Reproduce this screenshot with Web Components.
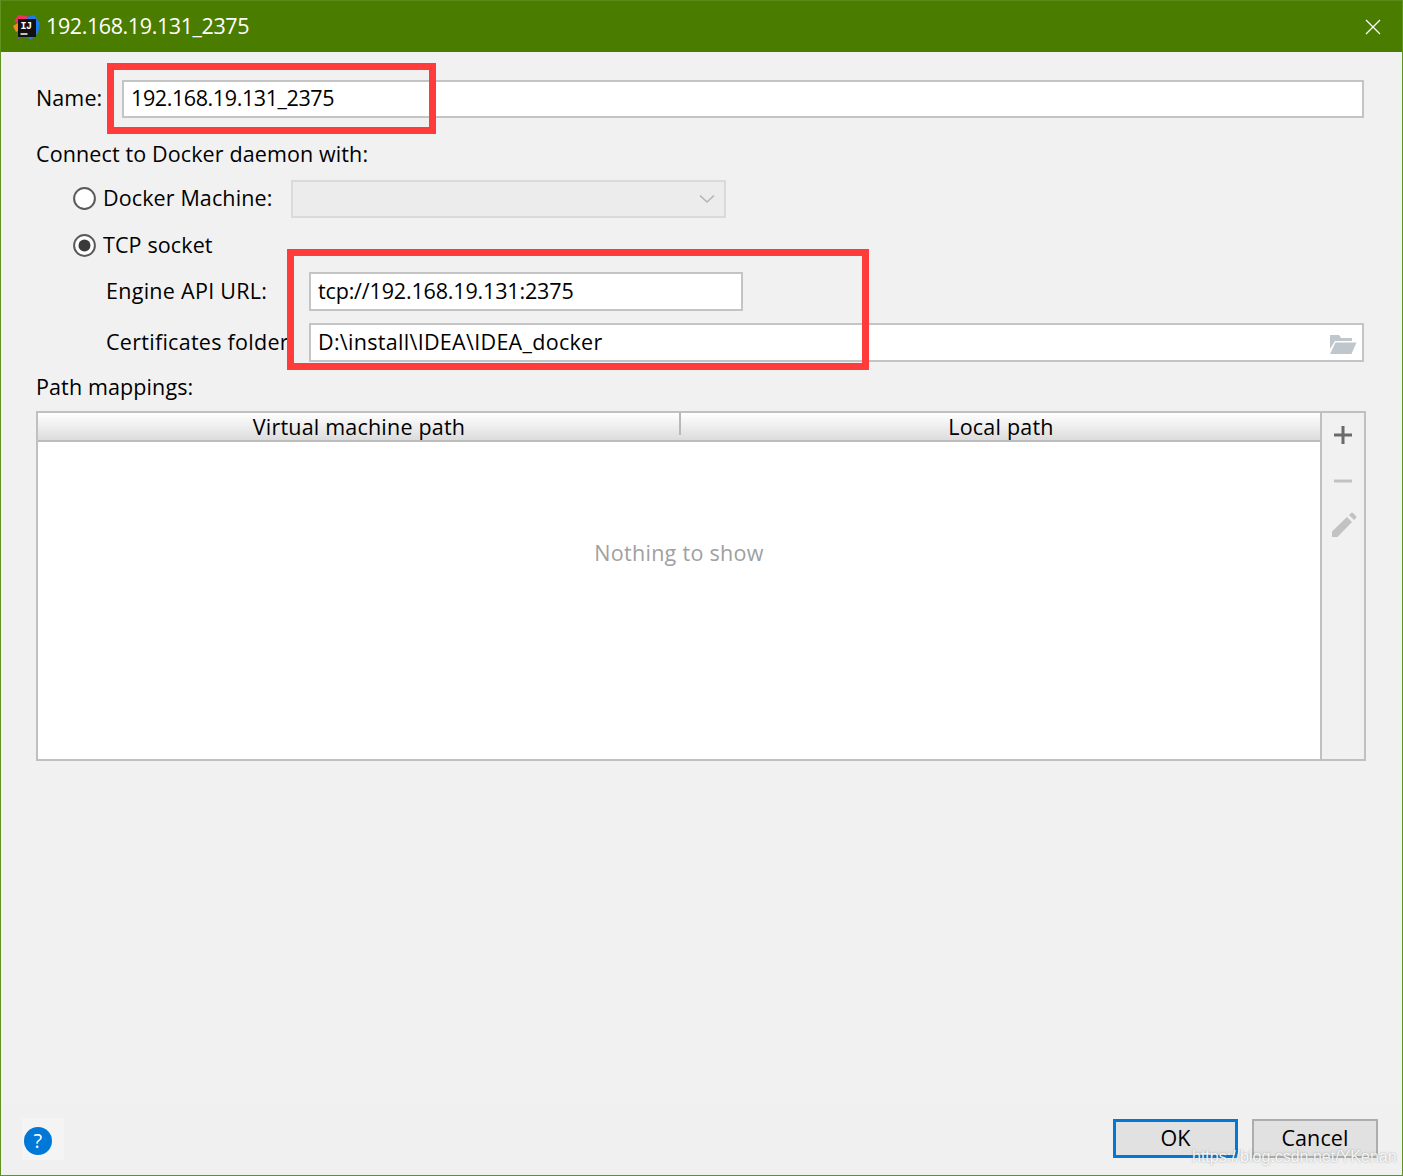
<!DOCTYPE html>
<html>
<head>
<meta charset="utf-8">
<title>192.168.19.131_2375</title>
<style>
  html, body { margin: 0; padding: 0; }
  body { font: 21.5px/30px 'Open Sans', 'Noto Sans', sans-serif; color: #000; letter-spacing: .12px; }
</style>
</head>
<body>
<ij-dialog heading="192.168.19.131_2375">
  <ij-row label="Name:" label-width="86" style="height:38px;margin-top:28px;margin-right:38px;--label-pad:2px">
    <ij-input value="192.168.19.131_2375" spacing="-.4"></ij-input>
  </ij-row>
  <ij-text style="margin-top:21px">Connect to Docker daemon with:</ij-text>
  <ij-row style="height:38px;margin-top:11px;margin-left:37px">
    <ij-radio style="width:218px;padding-bottom:2px">Docker Machine:</ij-radio>
    <ij-select style="width:435px"></ij-select>
  </ij-row>
  <ij-radio checked style="margin-top:12px;margin-left:37px">TCP socket</ij-radio>
  <ij-row label="Engine API URL:" label-width="203" style="height:39px;margin-top:12px;margin-left:70px;letter-spacing:.28px">
    <ij-input value="tcp://192.168.19.131:2375" spacing="-.16" style="flex:none;width:434px"></ij-input>
  </ij-row>
  <ij-row label="Certificates folder:" label-width="203" style="height:39px;margin-top:12px;margin-left:70px;margin-right:38px;letter-spacing:.28px">
    <ij-input value="D:\install\IDEA\IDEA_docker" spacing=".3" folder></ij-input>
  </ij-row>
  <ij-text style="margin-top:10px">Path mappings:</ij-text>
  <ij-table style="margin-top:9px;margin-right:36px" left="Virtual machine path" right="Local path" empty="Nothing to show"></ij-table>
</ij-dialog>

<script>
const ICON_FOLDER = `<svg width="28" height="20" viewBox="0 0 28 20"><path fill="#c0c7cc" d="M1 1h9l2 3h11v3H6L1 15z"/><path fill="#c0c7cc" d="M6.5 8.5H27.5L22.5 20H1z"/></svg>`;

class IjText extends HTMLElement {
  constructor() {
    super();
    this.attachShadow({ mode: 'open' }).innerHTML = `
      <style>:host { display: block; white-space: nowrap; }</style><slot></slot>`;
  }
}

class IjRow extends HTMLElement {
  constructor() {
    super();
    const label = this.getAttribute('label');
    const w = this.getAttribute('label-width');
    this.attachShadow({ mode: 'open' }).innerHTML = `
      <style>
        :host { display: flex; align-items: stretch; }
        .label { flex: none; white-space: nowrap; display: flex; align-items: center;
          padding-bottom: var(--label-pad, 1px); box-sizing: border-box; }
      </style>
      ${label ? `<div class="label" style="width:${w}px">${label}</div>` : ''}
      <slot></slot>`;
  }
}

class IjInput extends HTMLElement {
  constructor() {
    super();
    const folder = this.hasAttribute('folder');
    this.attachShadow({ mode: 'open' }).innerHTML = `
      <style>
        :host { display: flex; flex: 1; align-items: center; justify-content: space-between;
          box-sizing: border-box; background: #fff; border: 2px solid #c4c4c4;
          padding: 0 5px 2px 7px; white-space: nowrap; }
        span { letter-spacing: ${this.getAttribute('spacing') || 0}px; }
        svg { display: block; margin-top: 5px; }
      </style>
      <span>${this.getAttribute('value')}</span>${folder ? ICON_FOLDER : ''}`;
  }
}

class IjSelect extends HTMLElement {
  constructor() {
    super();
    this.attachShadow({ mode: 'open' }).innerHTML = `
      <style>
        :host { display: flex; align-items: center; justify-content: flex-end; box-sizing: border-box;
          background: #ececec; border: 2px solid #dadada; padding-right: 9px; }
        svg { display: block; }
      </style>
      <svg width="16" height="10" viewBox="0 0 16 10"><path d="M1 1.5l7 6.5 7-6.5" fill="none" stroke="#b4b4b4" stroke-width="1.6"/></svg>`;
  }
}

class IjRadio extends HTMLElement {
  constructor() {
    super();
    const checked = this.hasAttribute('checked');
    this.attachShadow({ mode: 'open' }).innerHTML = `
      <style>
        :host { display: flex; align-items: center; gap: 7px; white-space: nowrap; box-sizing: border-box; }
        svg { display: block; flex: none; }
      </style>
      <svg width="23" height="23" viewBox="0 0 23 23">
        <circle cx="11.5" cy="11.5" r="10.4" fill="#fff" stroke="#5a5a5a" stroke-width="2"/>
        ${checked ? '<circle cx="11.5" cy="11.5" r="6" fill="#3a3a3a"/>' : ''}
      </svg><span><slot></slot></span>`;
  }
}

class IjTable extends HTMLElement {
  constructor() {
    super();
    this.attachShadow({ mode: 'open' }).innerHTML = `
      <style>
        :host { display: flex; box-sizing: border-box; height: 350px; border: 2px solid #c0c0c0; letter-spacing: .2px; }
        .main { flex: 1; display: flex; flex-direction: column; background: #fff; min-width: 0; }
        .head { display: flex; height: 29px; flex: none; box-sizing: border-box;
          background: linear-gradient(#ffffff, #dcdcdc); border-bottom: 2px solid #bcbcbc; }
        .head div { flex: 1; text-align: center; line-height: 28px; white-space: nowrap; padding-left: 1px; }
        .head div:first-child { flex: none; width: 643px; box-sizing: border-box; border-right: 2px solid #b8b8b8; margin: 0 0 5px; height: 22px; line-height: 28px; }
        .empty { flex: 1; display: flex; align-items: center; justify-content: center;
          color: #a0a0a0; padding-bottom: 96px; letter-spacing: .28px; }
        .tools { flex: none; width: 44px; border-left: 2px solid #c0c0c0; background: #f1f1f1;
          display: flex; flex-direction: column; align-items: center; gap: 20px; padding-top: 12px; box-sizing: border-box; }
        svg { display: block; }
      </style>
      <div class="main">
        <div class="head"><div>${this.getAttribute('left')}</div><div>${this.getAttribute('right')}</div></div>
        <div class="empty">${this.getAttribute('empty')}</div>
      </div>
      <div class="tools">
        <svg width="20" height="20" viewBox="0 0 20 20"><path d="M10 1v18M1 10h18" stroke="#6a6a6a" stroke-width="3"/></svg>
        <svg width="20" height="20" viewBox="0 0 20 20" style="margin-top:6px"><path d="M1 10h18" stroke="#c2c2c2" stroke-width="3"/></svg>
        <svg width="26" height="26" viewBox="0 0 26 26" style="margin-top:1px;margin-left:2px"><path fill="#c2c2c2" d="M1 19.5L16 5l5 5L6.5 25H1zM18 3l2-2q1-1 2 0l3 3q1 1 0 2l-2 2z"/></svg>
      </div>`;
  }
}

class IjButton extends HTMLElement {
  constructor() {
    super();
    this.attachShadow({ mode: 'open' }).innerHTML = `
      <style>
        :host { display: flex; align-items: center; justify-content: center; box-sizing: border-box;
          width: 126px; height: 39px; padding-bottom: 2px; background: #e1e1e1; border: 2px solid #adadad; }
        :host([default]) { border: 3px solid #0078d7; width: 125px; }
      </style><slot></slot>`;
  }
}

class IjDialog extends HTMLElement {
  constructor() {
    super();
    this.attachShadow({ mode: 'open' }).innerHTML = `
      <style>
        :host { display: flex; flex-direction: column; position: relative; box-sizing: border-box;
          width: 1403px; height: 1176px; overflow: hidden; background: #f1f1f1;
          border: 1px solid #5f9420; border-top: 0; }
        .title { flex: none; height: 52px; background: #4a7c00; color: #fff; display: flex; align-items: center;
          padding: 0 21px 0 12px; gap: 4px; margin: 0 -1px; border-top: 1px solid #5a8a1a; box-sizing: border-box; }
        .title span { flex: 1; margin-top: -2px; letter-spacing: -.4px; }
        .content { flex: 1; padding: 0 0 0 35px; }
        .foot { flex: none; height: 72px; box-sizing: border-box; background: #f0f0f0; display: flex; align-items: flex-start;
          padding: 16px 24px 0 21px; gap: 14px; }
        .help { flex: none; width: 42px; height: 42px; margin-top: -1px; background: #f4f4f4; display: flex; align-items: center; padding: 4px 0 0 2px; box-sizing: border-box; margin-right: auto; }
        .mark { position: absolute; box-sizing: border-box; border: 7px solid #ff3b3b; pointer-events: none; }
        .wm { position: absolute; left: 1191px; top: 1147px; color: rgba(255,255,255,.9); font: 16px/20px 'Liberation Sans', sans-serif; letter-spacing: 0;
          text-shadow: 0 0 2px rgba(90,90,90,.55); white-space: nowrap; }
        svg { display: block; flex: none; }
      </style>
      <div class="title">
        <svg width="30" height="28" viewBox="0 0 30 28">
          <path fill="#f0305f" d="M2 9l4-7 13 2-6 8z"/>
          <path fill="#f08a1d" d="M1 13l5-3 1 8-3 1z"/>
          <path fill="#8f4aa0" d="M5 18l6 3-5 6z"/>
          <path fill="#1d7bea" d="M15 4l7-2 6 8-2 10-7 7-7-5z"/>
          <rect x="6" y="6" width="18" height="18" fill="#111"/>
          <text x="8.5" y="16" font-family="'Liberation Mono',monospace" font-size="10" font-weight="700" fill="#fff" letter-spacing="-.5">IJ</text>
          <path d="M8.5 21h7" stroke="#fff" stroke-width="1.5"/>
        </svg>
        <span>${this.getAttribute('heading')}</span>
        <svg width="18" height="18" viewBox="0 0 18 18"><path d="M2 2l14 14M16 2L2 16" stroke="#fff" stroke-width="1.3"/></svg>
      </div>
      <div class="content"><slot></slot></div>
      <div class="foot">
        <div class="help">
          <svg width="28" height="28" viewBox="0 0 28 28"><circle cx="14" cy="14" r="14" fill="#0078d7"/><text x="14" y="21" text-anchor="middle" font-family="'Open Sans',sans-serif" font-size="20" fill="#fff">?</text></svg>
        </div>
        <ij-button default>OK</ij-button>
        <ij-button>Cancel</ij-button>
      </div>
      <div class="mark" style="left:106px;top:63px;width:329px;height:71px"></div>
      <div class="mark" style="left:286px;top:249px;width:582px;height:121px"></div>
      <div class="wm">https://blog.csdn.net/YKenan</div>`;
  }
}

customElements.define('ij-text', IjText);
customElements.define('ij-row', IjRow);
customElements.define('ij-input', IjInput);
customElements.define('ij-select', IjSelect);
customElements.define('ij-radio', IjRadio);
customElements.define('ij-table', IjTable);
customElements.define('ij-button', IjButton);
customElements.define('ij-dialog', IjDialog);
</script>
</body>
</html>
